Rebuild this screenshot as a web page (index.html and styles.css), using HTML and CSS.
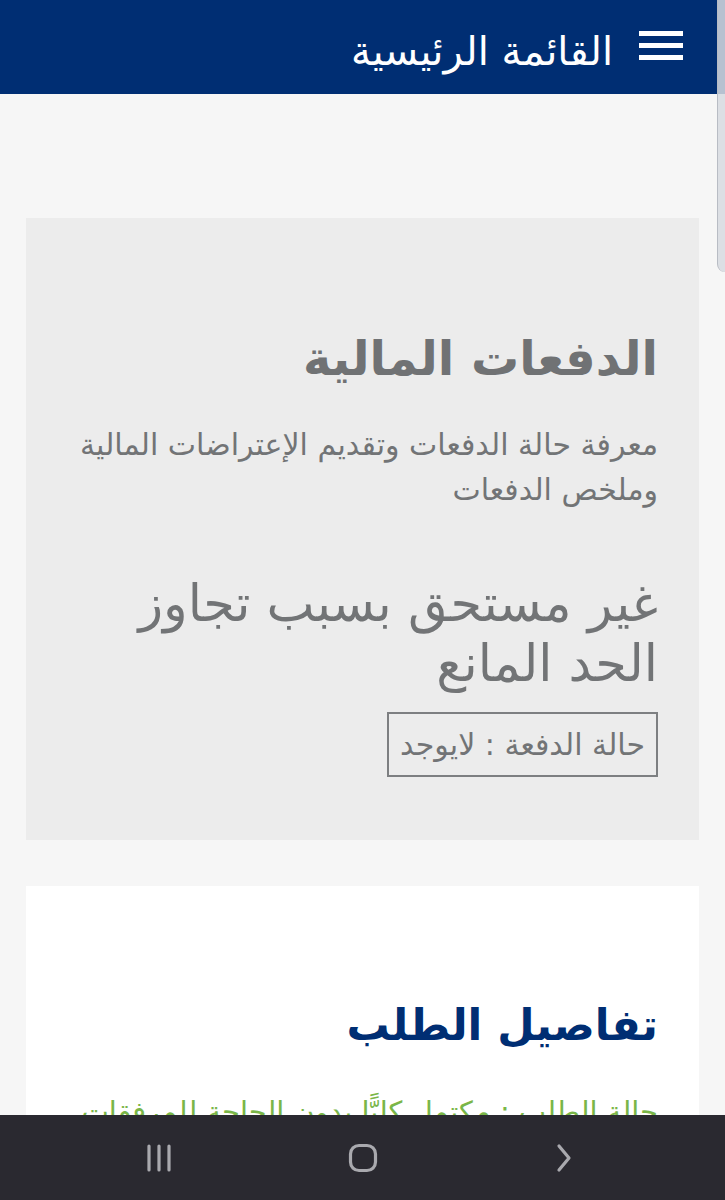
FILE: index.html
```html
<!DOCTYPE html>
<html lang="ar" dir="rtl">
<head>
  <meta charset="utf-8">
  <meta name="viewport" content="width=device-width, initial-scale=1">
  <link rel="stylesheet" href="styles.css">
  <title>الدفعات المالية</title>
</head>
<body>

<!-- Top bar -->
<header class="topbar">
  <button class="menu-btn" aria-label="القائمة">
    <span></span><span></span><span></span>
  </button>
  <h1 class="topbar-title">القائمة الرئيسية</h1>
</header>

<main class="content">
  <!-- Payments card -->
  <section class="card card-grey">
    <h2 class="card-title">الدفعات المالية</h2>
    <p class="card-desc">معرفة حالة الدفعات وتقديم الإعتراضات المالية وملخص الدفعات</p>
    <p class="card-status">غير مستحق بسبب تجاوز الحد المانع</p>
    <div class="status-box">حالة الدفعة : لايوجد</div>
  </section>

  <!-- Request details card -->
  <section class="card card-white">
    <h2 class="card-title navy">تفاصيل الطلب</h2>
    <p class="request-state">حالة الطلب : مكتمل كليًّا بدون الحاجة للمرفقات</p>
  </section>
</main>

<div class="scroll-thumb"></div>

<!-- Phone navigation bar -->
<nav class="navbar">
  <svg class="nav-icon" width="30" height="30" viewBox="0 0 30 30">
    <path d="M4 3v24M14 3v24M24 3v24" stroke="#a9a9ae" stroke-width="3.2" stroke-linecap="round" fill="none"/>
  </svg>
  <svg class="nav-icon" width="30" height="30" viewBox="0 0 30 30">
    <rect x="2.5" y="2.5" width="25" height="25" rx="8.5" stroke="#a9a9ae" stroke-width="3.2" fill="none"/>
  </svg>
  <svg class="nav-icon" width="30" height="30" viewBox="0 0 30 30">
    <path d="M8 3l10 12-10 12" stroke="#a9a9ae" stroke-width="3.2" stroke-linecap="round" stroke-linejoin="round" fill="none"/>
  </svg>
</nav>

</body>
</html>
```

FILE: styles.css
```css
body {
  font-family: "DejaVu Sans", "Noto Sans", sans-serif;
  background-color: #f6f6f6;
  margin: 0;
  padding: 0;
}
.topbar {
  display: flex;
  align-items: center;
  height: 94px;
  background-color: #002e73;
  padding: 0 42px 0 0;
  gap: 26px;
}
.menu-btn {
  display: flex;
  flex-direction: column;
  gap: 7px;
  width: 44px;
  padding: 0;
  background: none;
  border: none;
  margin-top: -4px;
}
.menu-btn span {
  display: block;
  height: 5px;
  background-color: #fff;
}
.topbar-title {
  margin: 8px 0 0;
  color: #fff;
  font-size: 40px;
  font-weight: normal;
}
.content {
  padding: 124px 26px 120px;
  display: flex;
  flex-direction: column;
  gap: 46px;
}
.card {
  padding: 110px 41px 60px;
}
.card-grey {
  background-color: #ececec;
  height: 622px;
  box-sizing: border-box;
}
.card-white {
  background-color: #fff;
  padding-top: 109px;
}
.card-title {
  margin: 0 0 34px;
  font-size: 48px;
  line-height: 60px;
  color: #707274;
}
.card-title.navy {
  color: #002e73;
  font-size: 43px;
  margin-bottom: 35px;
}
.card-desc {
  margin: 0 0 62px;
  font-size: 30px;
  line-height: 45px;
  color: #727476;
}
.card-status {
  margin: 0 0 18px;
  font-size: 51px;
  line-height: 60px;
  color: #727476;
}
.status-box {
  display: inline-block;
  border: 2px solid #7d7f81;
  padding: 10px 11px;
  font-size: 30px;
  line-height: 41px;
  color: #727476;
}
.request-state {
  margin: 0;
  font-size: 29px;
  line-height: 45px;
  color: #7ab648;
}
.scroll-thumb {
  position: fixed;
  top: 0;
  right: 0;
  width: 7px;
  height: 272px;
  background-color: rgba(215, 218, 224, 0.85);
  border-bottom-left-radius: 8px;
  border-left: 1px solid #b8bcc4;
}
.navbar {
  position: fixed;
  left: 0;
  right: 0;
  bottom: 0;
  height: 85px;
  background-color: #2a2930;
  display: flex;
  justify-content: space-around;
  align-items: center;
  direction: ltr;
  padding: 0 58px;
}
```
